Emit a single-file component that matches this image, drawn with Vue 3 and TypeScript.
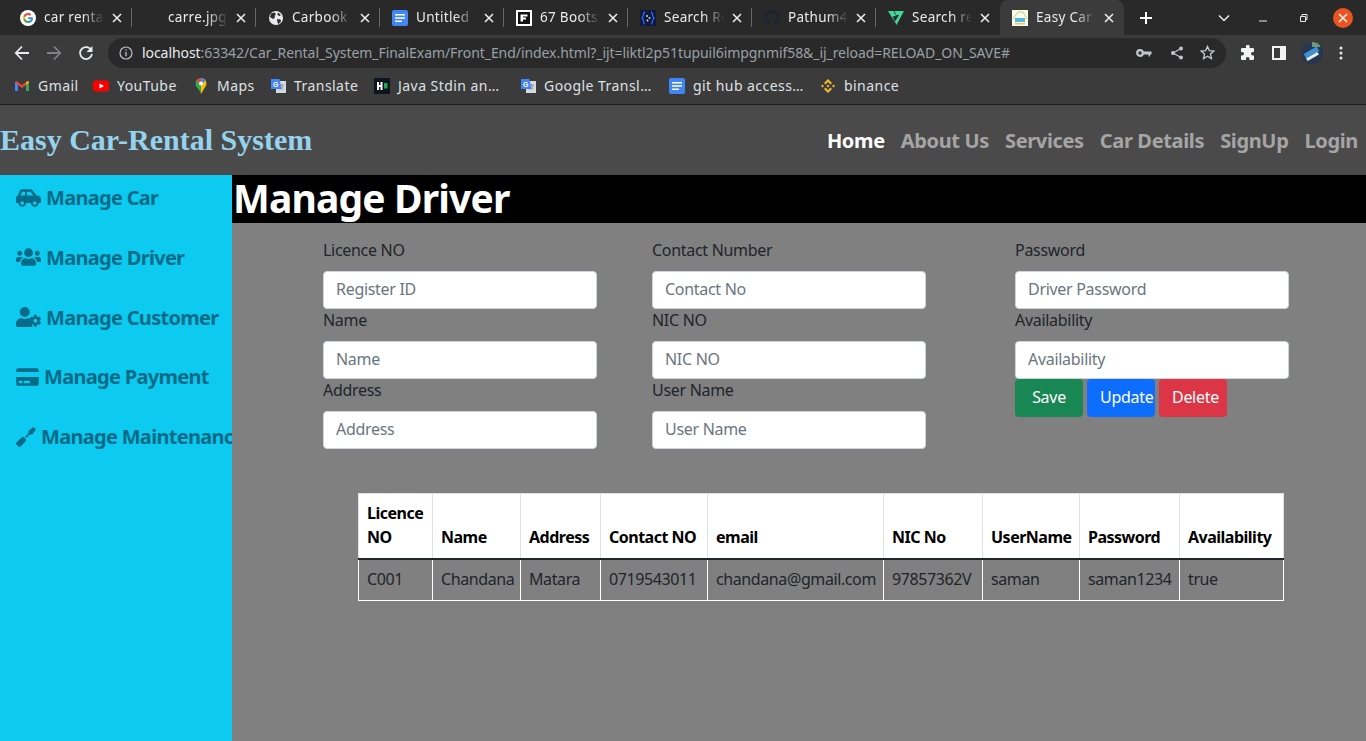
<template>
  <div class="page">
    <!-- browser chrome -->
    <div class="tabstrip">
      <div v-for="t in tabs" :key="t.title" class="tab" :class="{ active: t.active }">
        <span class="favicon">
          <svg v-if="t.icon === 'google'" viewBox="0 0 16 16" width="16" height="16">
            <circle cx="8" cy="8" r="8" fill="#fff" />
            <path d="M12.9 8.2c0-.4 0-.7-.1-1H8v1.9h2.8c-.1.7-.5 1.2-1 1.6v1.3h1.6c1-.9 1.5-2.2 1.5-3.8z" fill="#4285f4" />
            <path d="M8 13c1.4 0 2.5-.5 3.4-1.300L9.800 10.400c-.5.3-1 .5-1.800.5-1.300 0-2.500-.9-2.900-2.100H3.500v1.300C4.300 11.900 6 13 8 13z" fill="#34a853" />
            <path d="M5.100 8.800c-.2-.5-.2-1.100 0-1.600V5.900H3.500c-.7 1.300-.7 2.900 0 4.200z" fill="#fbbc05" />
            <path d="M8 5c.8 0 1.400.3 1.900.8l1.400-1.400C10.500 3.500 9.400 3 8 3 6 3 4.300 4.100 3.500 5.900l1.600 1.300C5.500 5.900 6.700 5 8 5z" fill="#ea4335" />
          </svg>
          <svg v-else-if="t.icon === 'globe'" viewBox="0 0 16 16" width="16" height="16">
            <circle cx="8" cy="8" r="7" fill="#e8eaed" />
            <path d="M3 3.500 6.500 2.500 8 4 6.500 6 7 7.500 5 9 2 7zM9 9l3.500.5.5 2-2.500 2.500-1-1.500zM10 2.500l3 2.500-1.500 1-2-1z" fill="#2b2b2b" />
          </svg>
          <svg v-else-if="t.icon === 'docs'" viewBox="0 0 16 16" width="16" height="16">
            <rect width="16" height="16" rx="2" fill="#4285f4" />
            <path d="M3 4h10v1.500H3zM3 7.200h10v1.500H3zM3 10.400h7v1.500H3z" fill="#fff" />
          </svg>
          <svg v-else-if="t.icon === 'f'" viewBox="0 0 16 16" width="16" height="16">
            <rect width="16" height="16" fill="#fff" />
            <path d="M2 2h12v12H2zM4.500 4.500v7H7V9.500h3V7.500H7v-1h4.500v-2z" fill="#111" fill-rule="evenodd" />
          </svg>
          <svg v-else-if="t.icon === 'code'" viewBox="0 0 16 16" width="16" height="16">
            <rect width="16" height="16" fill="#101a3c" />
            <path d="M5 2C3 2 4 7 2 8c2 1 1 6 3 6M11 2c2 0 1 5 3 6-2 1-1 6-3 6" fill="none" stroke="#2a6bf2" stroke-width="1.300" />
            <circle cx="7" cy="6" r="1" fill="#cfd8ea" /><circle cx="9.500" cy="8" r="1" fill="#cfd8ea" /><circle cx="7.500" cy="10.500" r="1" fill="#cfd8ea" />
          </svg>
          <svg v-else-if="t.icon === 'github'" viewBox="0 0 16 16" width="16" height="16">
            <path d="M8 0a8 8 0 0 0-2.500 15.600c.4.1.5-.2.5-.4v-1.400c-2.200.5-2.700-1-2.700-1-.4-.9-.9-1.200-.9-1.200-.7-.5.1-.5.1-.5.8.1 1.200.8 1.200.8.7 1.200 1.900.9 2.300.7.1-.5.3-.9.5-1.100-1.800-.2-3.600-.9-3.600-4 0-.9.3-1.600.8-2.100-.1-.2-.4-1 .1-2.100 0 0 .7-.2 2.200.8a7.600 7.600 0 0 1 4 0c1.500-1 2.200-.8 2.200-.8.4 1.100.2 1.900.1 2.100.5.6.8 1.300.8 2.100 0 3.100-1.900 3.700-3.700 3.900.3.3.6.8.6 1.500v2.200c0 .2.1.5.6.4A8 8 0 0 0 8 0z" fill="#1c2530" />
          </svg>
          <svg v-else-if="t.icon === 'vuetify'" viewBox="0 0 16 16" width="16" height="16">
            <path d="M0 1h5.500L8 6 4.500 6.500 8 14zM6.500 1H16L8.500 15l-1.500-3.500L11 5H8z" fill="#41d69a" />
          </svg>
          <svg v-else-if="t.icon === 'easy'" viewBox="0 0 16 16" width="16" height="16">
            <rect width="16" height="16" fill="#fbfbee" />
            <path d="M1 9 6 2h5l4 7" fill="none" stroke="#b9d36d" stroke-width="1" />
            <rect x="3" y="8" width="10" height="4" fill="#55b8e8" />
            <rect x="3" y="13" width="10" height="1.500" fill="#e9c95a" />
          </svg>
        </span>
        <span class="tab-title">{{ t.title }}</span>
        <svg class="tab-close" viewBox="0 0 10 10" width="10" height="10"><path d="M1 1l8 8M9 1l-8 8" stroke="#e8eaed" stroke-width="1.600" /></svg>
      </div>
      <svg class="newtab" viewBox="0 0 14 14" width="14" height="14"><path d="M7 1v12M1 7h12" stroke="#fff" stroke-width="2" /></svg>
      <div class="winctl">
        <svg class="chev" viewBox="0 0 12 8" width="12" height="8"><path d="M1 1.500 6 6.500l5-5" fill="none" stroke="#e8eaed" stroke-width="1.500" /></svg>
        <svg class="ctl-min" viewBox="0 0 10 10" width="10" height="10"><path d="M1 8h8" stroke="#e8eaed" stroke-width="1" /></svg>
        <svg class="ctl-max" viewBox="0 0 10 10" width="10" height="10"><path d="M2.500 3.500h5v5h-5zM4 3.500V1.500h5v5H7.500" fill="none" stroke="#e8eaed" stroke-width="1" /></svg>
        <span class="ctl-close"><svg viewBox="0 0 10 10" width="10" height="10"><path d="M1 1l8 8M9 1l-8 8" stroke="#fff" stroke-width="1.400" /></svg></span>
      </div>
    </div>

    <div class="toolbar">
      <svg class="tb-ico" viewBox="0 0 16 16" width="16" height="16"><path d="M15 8H2M8 1.500 1.800 8 8 14.500" fill="none" stroke="#e8eaed" stroke-width="1.800" /></svg>
      <svg class="tb-ico" viewBox="0 0 16 16" width="16" height="16"><path d="M1 8h13M8 1.500 14.200 8 8 14.500" fill="none" stroke="#7f8184" stroke-width="1.800" /></svg>
      <svg class="tb-ico" viewBox="0 0 16 16" width="16" height="16"><path d="M13.500 5.500A6 6 0 1 0 14 9" fill="none" stroke="#e8eaed" stroke-width="1.800" /><path d="M14.500 1v6h-6z" fill="#e8eaed" /></svg>
      <div class="omnibox">
        <svg class="info" viewBox="0 0 14 14" width="14" height="14"><circle cx="7" cy="7" r="6" fill="none" stroke="#bdc1c6" stroke-width="1.200" /><path d="M7 6v4.200M7 3.500v1.300" stroke="#bdc1c6" stroke-width="1.300" /></svg>
        <span class="url"><b>localhost</b>:63342/Car_Rental_System_FinalExam/Front_End/index.html?_ijt=liktl2p51tupuil6impgnmif58&amp;_ij_reload=RELOAD_ON_SAVE#</span>
        <svg class="omni-ico key" viewBox="0 0 16 10" width="16" height="10"><circle cx="4" cy="5" r="2.800" fill="none" stroke="#c4c7ca" stroke-width="2.200" /><path d="M7 3.500h8.500v3H14V8.500h-1.500v-2H7z" fill="#c4c7ca" /></svg>
        <svg class="omni-ico share" viewBox="0 0 14 14" width="14" height="14"><circle cx="11" cy="2.500" r="2" fill="#c4c7ca" /><circle cx="3" cy="7" r="2" fill="#c4c7ca" /><circle cx="11" cy="11.500" r="2" fill="#c4c7ca" /><path d="M11 2.500 3 7l8 4.500" fill="none" stroke="#c4c7ca" stroke-width="1.200" /></svg>
        <svg class="omni-ico" viewBox="0 0 16 16" width="15" height="15"><path d="M8 1.500 10 6l4.800.5-3.600 3.200 1 4.800L8 12l-4.200 2.500 1-4.800L1.200 6.500 6 6z" fill="none" stroke="#c4c7ca" stroke-width="1.400" /></svg>
      </div>
      <div class="tb-right">
        <svg viewBox="0 0 16 16" width="16" height="16"><path d="M6 1.500a1.800 1.800 0 0 1 3.600 0V3H13a1 1 0 0 1 1 1v3h-1.200a1.800 1.800 0 0 0 0 3.600H14V14a1 1 0 0 1-1 1H9.500v-1.200a1.800 1.800 0 0 0-3.600 0V15H2a1 1 0 0 1-1-1v-3.500h1.200a1.800 1.800 0 0 0 0-3.600H1V4a1 1 0 0 1 1-1h4z" fill="#f1f3f4" /></svg>
        <svg viewBox="0 0 14 14" width="14" height="14"><path d="M0 0h14v14H0zM2 2v10h6V2z" fill="#f1f3f4" fill-rule="evenodd" /></svg>
        <span class="avatar"><i class="av1"></i><i class="av2"></i><i class="av3"></i></span>
        <svg viewBox="0 0 4 14" width="4" height="14"><circle cx="2" cy="2" r="1.500" fill="#e8eaed" /><circle cx="2" cy="7" r="1.500" fill="#e8eaed" /><circle cx="2" cy="12" r="1.500" fill="#e8eaed" /></svg>
      </div>
    </div>

    <div class="bookmarks">
      <div v-for="b in bookmarks" :key="b.label" class="bookmark" :style="{ width: b.width + 'px' }">
        <span class="bm-ico">
          <svg v-if="b.icon === 'gmail'" viewBox="0 0 16 16" width="16" height="16">
            <path d="M1 4v9h3V7l4 3 4-3v6h3V4l-1.500-1L8 7 2.500 3z" fill="#ea4335" />
            <path d="M1 4v9h3V7z" fill="#4285f4" /><path d="M15 4v9h-3V7z" fill="#34a853" /><path d="M12 7V4.300L14 3l1 1z" fill="#fbbc05" />
          </svg>
          <svg v-else-if="b.icon === 'youtube'" viewBox="0 0 16 16" width="16" height="16">
            <rect x="0" y="2.500" width="16" height="11" rx="3" fill="#f00" /><path d="M6.500 5.500 11 8l-4.500 2.500z" fill="#fff" />
          </svg>
          <svg v-else-if="b.icon === 'maps'" viewBox="0 0 16 16" width="16" height="16">
            <path d="M8 0a5.500 5.500 0 0 0-5.500 5.500C2.500 9.500 7 11.500 8 16z" fill="#34a853" />
            <path d="M8 0a5.500 5.500 0 0 1 5.500 5.500c0 1-.4 2-1 3L8 16z" fill="#fbbc05" />
            <path d="M3.500 2.500A5.500 5.500 0 0 1 8 0v3.500A2 2 0 0 0 6 5z" fill="#ea4335" />
            <path d="M8 0a5.500 5.500 0 0 1 4.500 2.500L10 5a2 2 0 0 0-2-1.500z" fill="#4285f4" />
            <circle cx="8" cy="5.500" r="2" fill="#fff" />
          </svg>
          <svg v-else-if="b.icon === 'translate'" viewBox="0 0 16 16" width="16" height="16">
            <rect x="6" y="3" width="10" height="12" fill="#d7dadc" />
            <path d="M9 7h5M11.500 6v1.500M13 7.500c-.5 2-2 3.500-3.500 4M10 8.500c.8 1.500 2 2.500 3.500 3" fill="none" stroke="#8a8f94" stroke-width=".9" />
            <path d="M1 1h8.500l2 10H1z" fill="#4285f4" />
            <text x="3" y="8.500" font-size="7" font-weight="700" fill="#fff" font-family="Liberation Sans, sans-serif">G</text>
          </svg>
          <svg v-else-if="b.icon === 'hacker'" viewBox="0 0 16 16" width="16" height="16">
            <rect width="16" height="16" fill="#0e141e" />
            <path d="M3 4h2v3h1.500V4h2v8h-2V9H5v3H3z" fill="#fff" /><rect x="10" y="5" width="3.500" height="5.500" fill="#1ba94c" />
          </svg>
          <svg v-else-if="b.icon === 'docs'" viewBox="0 0 16 16" width="16" height="16">
            <rect width="16" height="16" rx="2" fill="#4285f4" />
            <path d="M3 4h10v1.500H3zM3 7.200h10v1.500H3zM3 10.400h7v1.500H3z" fill="#fff" />
          </svg>
          <svg v-else-if="b.icon === 'binance'" viewBox="0 0 16 16" width="16" height="16">
            <path d="M8 1 12 5l-1.500 1.500L8 4 5.500 6.500 4 5zM2.500 6.500 4 8 2.500 9.500 1 8zM13.500 6.500 15 8l-1.500 1.500L12 8zM8 6.500 9.500 8 8 9.500 6.500 8zM4 11l1.500-1.500L8 12l2.500-2.500L12 11l-4 4z" fill="#f3ba2f" />
          </svg>
        </span>
        <span class="bm-label">{{ b.label }}</span>
      </div>
    </div>

    <!-- page -->
    <nav class="navbar">
      <span class="brand">Easy Car-Rental System</span>
      <ul class="nav-links">
        <li v-for="(l, i) in navLinks" :key="l" :class="{ current: i === 0 }">{{ l }}</li>
      </ul>
    </nav>

    <div class="body-row">
      <aside class="sidebar">
        <a class="side-link">
          <svg class="si" viewBox="0 0 640 512"><path d="M544 192h-16L419.220 56.020A64.025 64.025 0 0 0 369.240 32H155.330c-26.170 0-49.700 15.930-59.420 40.230L48 194.260C20.440 201.400 0 226.210 0 256v112c0 8.840 7.160 16 16 16h48c0 53.020 42.980 96 96 96s96-42.980 96-96h128c0 53.020 42.980 96 96 96s96-42.980 96-96h48c8.840 0 16-7.160 16-16v-80c0-53.020-42.980-96-96-96zM160 432c-26.470 0-48-21.530-48-48s21.530-48 48-48 48 21.530 48 48-21.530 48-48 48zm72-240H116.930l38.400-96H232v96zm48 0V96h89.240l76.800 96H280zm200 240c-26.470 0-48-21.530-48-48s21.530-48 48-48 48 21.530 48 48-21.530 48-48 48z" /></svg>
          Manage Car
        </a>
        <a class="side-link">
          <svg class="si" viewBox="0 0 640 512"><path d="M96 224c35.300 0 64-28.700 64-64s-28.700-64-64-64-64 28.700-64 64 28.700 64 64 64zm448 0c35.300 0 64-28.700 64-64s-28.700-64-64-64-64 28.700-64 64 28.700 64 64 64zm32 32h-64c-17.600 0-33.500 7.100-45.100 18.600 40.300 22.100 68.900 62 75.100 109.400h66c17.700 0 32-14.300 32-32v-32c0-35.300-28.700-64-64-64zm-256 0c61.900 0 112-50.100 112-112S381.900 32 320 32 208 82.100 208 144s50.100 112 112 112zm76.800 32h-8.300c-20.800 10-43.900 16-68.500 16s-47.600-6-68.500-16h-8.300C179.600 288 128 339.600 128 403.200V432c0 26.500 21.500 48 48 48h288c26.500 0 48-21.500 48-48v-28.800c0-63.600-51.600-115.200-115.200-115.200zm-223.700-13.400C161.500 263.100 145.600 256 128 256H64c-35.300 0-64 28.700-64 64v32c0 17.700 14.300 32 32 32h65.900c6.300-47.400 34.900-87.300 75.200-109.400z" /></svg>
          Manage Driver
        </a>
        <a class="side-link">
          <svg class="si" viewBox="0 0 640 512"><path d="M224 256a128 128 0 1 0 0-256 128 128 0 0 0 0 256zM313 288h-16c-22 10-47 16-73 16s-51-6-73-16h-16C60 288 0 348 0 422v42c0 26 22 48 48 48h352c12 0 23-4 32-12-30-30-52-70-52-148 0-20 4-40 10-56-22-5-50-8-77-8zM610.500 373.300c2.600-14.100 2.600-28.500 0-42.600l25.800-14.900c3-1.700 4.300-5.200 3.300-8.500-6.700-21.600-18.200-41.200-33.200-57.400-2.300-2.500-6-3.100-9-1.400l-25.800 14.900c-10.900-9.300-23.400-16.500-36.900-21.300v-29.800c0-3.400-2.400-6.400-5.700-7.100-22.300-5-45-4.800-66.200 0-3.300.7-5.700 3.700-5.700 7.100v29.800c-13.500 4.800-26 12-36.900 21.300l-25.800-14.900c-2.900-1.700-6.700-1.100-9 1.400-15 16.200-26.500 35.800-33.200 57.400-1 3.300.4 6.800 3.300 8.500l25.800 14.900c-2.600 14.100-2.600 28.500 0 42.600l-25.800 14.900c-3 1.700-4.300 5.200-3.300 8.500 6.700 21.600 18.200 41.100 33.200 57.400 2.300 2.500 6 3.100 9 1.400l25.800-14.900c10.900 9.300 23.400 16.500 36.900 21.300v29.800c0 3.400 2.400 6.400 5.700 7.100 22.300 5 45 4.800 66.200 0 3.300-.7 5.700-3.700 5.700-7.100v-29.800c13.500-4.800 26-12 36.900-21.300l25.800 14.900c2.900 1.700 6.700 1.100 9-1.400 15-16.200 26.500-35.800 33.200-57.400 1-3.300-.4-6.800-3.300-8.500l-25.800-14.900zM496 400.500c-26.800 0-48.500-21.800-48.500-48.500s21.800-48.500 48.500-48.500 48.500 21.800 48.500 48.500-21.700 48.500-48.500 48.500z" /></svg>
          Manage Customer
        </a>
        <a class="side-link">
          <svg class="si card" viewBox="0 0 576 512"><path d="M0 432c0 26.500 21.500 48 48 48h480c26.500 0 48-21.500 48-48V256H0v176zm192-68c0-6.600 5.400-12 12-12h136c6.600 0 12 5.400 12 12v40c0 6.600-5.400 12-12 12H204c-6.600 0-12-5.400-12-12v-40zm-128 0c0-6.600 5.400-12 12-12h72c6.600 0 12 5.400 12 12v40c0 6.600-5.400 12-12 12H76c-6.600 0-12-5.400-12-12v-40zM576 80v48H0V80c0-26.500 21.500-48 48-48h480c26.500 0 48 21.500 48 48z" /></svg>
          Manage Payment
        </a>
        <a class="side-link">
          <svg class="si tool" viewBox="0 0 512 512"><path d="M448 0L320 96v62.060l-83.030 83.030c6.790 4.250 13.270 9.060 19.070 14.870 5.800 5.800 10.620 12.280 14.870 19.070L353.940 192H416l96-128-64-64zM128 278.590L10.920 395.670c-14.550 14.550-14.550 38.150 0 52.710l52.700 52.700c14.560 14.560 38.150 14.560 52.710 0L233.410 384c29.110-29.110 29.110-76.300 0-105.410s-76.300-29.110-105.410 0z" /></svg>
          Manage Maintenance
        </a>
      </aside>

      <main class="content">
        <h1 class="page-title">Manage Driver</h1>
        <form class="driver-form" @submit.prevent>
          <div v-for="(col, ci) in formCols" :key="ci" class="form-col" :class="'col-' + ci">
            <div v-for="f in col" :key="f.label" class="field">
              <label>{{ f.label }}</label>
              <input type="text" :placeholder="f.placeholder" />
            </div>
            <div v-if="ci === 2" class="btns">
              <button class="btn save">Save</button>
              <button class="btn update">Update</button>
              <button class="btn del">Delete</button>
            </div>
          </div>
        </form>

        <div class="table-wrap">
          <table class="driver-table">
            <colgroup>
              <col v-for="c in columns" :key="c.title" :style="{ width: c.width + 'px' }" />
            </colgroup>
            <thead>
              <tr>
                <th v-for="c in columns" :key="c.title">{{ c.title }}</th>
              </tr>
            </thead>
            <tbody>
              <tr v-for="row in drivers" :key="row[0]">
                <td v-for="(v, i) in row" :key="i">{{ v }}</td>
              </tr>
            </tbody>
          </table>
        </div>
      </main>
    </div>
  </div>
</template>

<script setup lang="ts">
const tabs = [
  { title: 'car rental', icon: 'google' },
  { title: 'carre.jpg', icon: 'none' },
  { title: 'Carbook', icon: 'globe' },
  { title: 'Untitled', icon: 'docs' },
  { title: '67 Boots', icon: 'f' },
  { title: 'Search Re', icon: 'code' },
  { title: 'Pathum4', icon: 'github' },
  { title: 'Search re', icon: 'vuetify' },
  { title: 'Easy Car', icon: 'easy', active: true },
]

const bookmarks = [
  { label: 'Gmail', icon: 'gmail', width: 79 },
  { label: 'YouTube', icon: 'youtube', width: 100 },
  { label: 'Maps', icon: 'maps', width: 77 },
  { label: 'Translate', icon: 'translate', width: 104 },
  { label: 'Java Stdin an…', icon: 'hacker', width: 146 },
  { label: 'Google Transl…', icon: 'translate', width: 149 },
  { label: 'git hub access…', icon: 'docs', width: 151 },
  { label: 'binance', icon: 'binance', width: 90 },
]

const navLinks = ['Home', 'About Us', 'Services', 'Car Details', 'SignUp', 'Login']

const formCols = [
  [
    { label: 'Licence NO', placeholder: 'Register ID' },
    { label: 'Name', placeholder: 'Name' },
    { label: 'Address', placeholder: 'Address' },
  ],
  [
    { label: 'Contact Number', placeholder: 'Contact No' },
    { label: 'NIC NO', placeholder: 'NIC NO' },
    { label: 'User Name', placeholder: 'User Name' },
  ],
  [
    { label: 'Password', placeholder: 'Driver Password' },
    { label: 'Availability', placeholder: 'Availability' },
  ],
]

const columns = [
  { title: 'Licence NO', width: 74 },
  { title: 'Name', width: 88 },
  { title: 'Address', width: 80 },
  { title: 'Contact NO', width: 107 },
  { title: 'email', width: 176 },
  { title: 'NIC No', width: 99 },
  { title: 'UserName', width: 97 },
  { title: 'Password', width: 100 },
  { title: 'Availability', width: 104 },
]

const drivers = [
  ['C001', 'Chandana', 'Matara', '0719543011', 'chandana@gmail.com', '97857362V', 'saman', 'saman1234', 'true'],
]
</script>

<style scoped>
.page {
  width: 1366px;
  height: 741px;
  overflow: hidden;
  display: flex;
  flex-direction: column;
  font-family: "Noto Sans", "DejaVu Sans", sans-serif;
  background: #808080;
}

/* chrome */
.tabstrip {
  height: 35px;
  flex: none;
  background: #292929;
  display: flex;
  align-items: center;
  padding-left: 8px;
  color: #e8eaed;
  font-size: 13.5px;
  letter-spacing: 0.3px;
}
.tab {
  width: 124px;
  height: 35px;
  padding: 0 12px;
  box-sizing: border-box;
  display: flex;
  align-items: center;
  position: relative;
}
.tab::after {
  content: "";
  position: absolute;
  right: 0;
  top: 8px;
  height: 19px;
  width: 1px;
  background: #666;
}
.tab.active::after,
.tab:nth-child(8)::after {
  display: none;
}
.tab.active {
  background: #3b3b3b;
  border-radius: 8px 8px 0 0;
}
.favicon {
  width: 16px;
  height: 16px;
  margin-right: 8px;
  flex: none;
  display: flex;
}
.tab-title {
  width: 60px;
  overflow: hidden;
  white-space: nowrap;
  line-height: 18px;
  margin-top: -2px;
  -webkit-mask-image: linear-gradient(90deg, #000 65%, transparent 100%);
  mask-image: linear-gradient(90deg, #000 65%, transparent 100%);
  flex: none;
}
.tab-close {
  margin-left: 8px;
  flex: none;
}
.newtab {
  margin-left: 15px;
}
.winctl {
  margin-left: auto;
  display: flex;
  align-items: center;
  padding-right: 13px;
}
.chev { margin-right: 28px; }
.ctl-min { margin-right: 30px; }
.ctl-max { margin-right: 25px; }
.ctl-close {
  width: 20px;
  height: 20px;
  border-radius: 50%;
  background: #e95420;
  display: flex;
  align-items: center;
  justify-content: center;
}

.toolbar {
  height: 35px;
  flex: none;
  background: #3b3b3b;
  display: flex;
  align-items: center;
  padding-left: 14px;
}
.tb-ico {
  margin-right: 16px;
  flex: none;
}
.omnibox {
  width: 1118px;
  height: 30px;
  margin-left: -2px;
  border-radius: 15px;
  background: #292929;
  flex: none;
  display: flex;
  align-items: center;
  padding-left: 11px;
  box-sizing: border-box;
}
.info {
  margin-right: 9px;
  flex: none;
}
.url {
  width: 980px;
  flex: none;
  white-space: nowrap;
  overflow: hidden;
  font-size: 14px;
  letter-spacing: -0.065px;
  color: #9aa0a6;
}
.url b {
  font-weight: 400;
  color: #e8eaed;
}
.omni-ico {
  flex: none;
  margin-left: 16px;
}
.omni-ico.key { margin-left: 14px; }
.omni-ico.share { margin-left: 18px; }
.tb-right {
  display: flex;
  align-items: center;
  margin-left: 14px;
  gap: 16px;
}
.avatar {
  width: 22px;
  height: 22px;
  border-radius: 50%;
  overflow: hidden;
  position: relative;
  background: #26384f;
  display: block;
  margin: 0 0 0 -1px;
}
.avatar i {
  position: absolute;
  display: block;
}
.av1 { left: 3px; top: 8px; width: 15px; height: 5px; background: #3d8fd6; transform: rotate(-30deg); }
.av2 { left: 5px; top: 13px; width: 13px; height: 3px; background: #e9eef2; transform: rotate(-30deg); }
.av3 { left: 11px; top: 0; width: 8px; height: 5px; background: #6f9b73; }

.bookmarks {
  height: 35px;
  flex: none;
  box-sizing: border-box;
  background: #3b3b3b;
  border-bottom: 1px solid #1f1f1f;
  display: flex;
  align-items: center;
  padding: 0 0 3px 14px;
  font-size: 14px;
  letter-spacing: 0.45px;
  color: #dfe1e5;
}
.bookmark {
  display: flex;
  align-items: center;
  flex: none;
}
.bm-ico {
  width: 16px;
  height: 16px;
  display: flex;
  margin-right: 8px;
  flex: none;
}
.bm-label { white-space: nowrap; }

/* navbar */
.navbar {
  height: 70px;
  flex: none;
  box-sizing: border-box;
  background: #4a4a4a;
  display: flex;
  align-items: center;
  justify-content: space-between;
  padding-right: 8px;
}
.brand {
  font-family: "Liberation Serif", serif;
  font-weight: 700;
  font-size: 30px;
  color: #95d2ee;
}
.nav-links {
  display: flex;
  gap: 16px;
  list-style: none;
  margin: 0;
  padding: 0;
  font-size: 20px;
  font-weight: 700;
  letter-spacing: -0.35px;
  color: #a5a5a5;
}
.nav-links .current { color: #fff; }

/* body */
.body-row {
  flex: 1;
  display: flex;
  min-height: 0;
}
.sidebar {
  width: 232px;
  flex: none;
  background: #0dcaf0;
  overflow: hidden;
  padding: 7.6px 0 0 16px;
  box-sizing: border-box;
}
.side-link {
  display: flex;
  align-items: center;
  gap: 5px;
  height: 30px;
  margin-bottom: 29.75px;
  font-size: 20px;
  font-weight: 700;
  letter-spacing: -0.7px;
  color: #056b87;
  white-space: nowrap;
}
.si {
  height: 20px;
  width: 25px;
  fill: #056b87;
  flex: none;
}
.si.card { width: 23px; }
.si.tool { width: 20px; }

.content {
  flex: 1;
  min-width: 0;
  background: #808080;
}
.page-title {
  margin: 0;
  height: 48px;
  line-height: 46px;
  background: #000;
  color: #fff;
  font-size: 39px;
  font-weight: 700;
  letter-spacing: -0.85px;
  padding-left: 1px;
}
.driver-form {
  display: flex;
  padding: 15px 0 0 91px;
  letter-spacing: -0.3px;
}
.form-col {
  width: 274px;
  flex: none;
}
.col-0 { margin-right: 55px; }
.col-1 { margin-right: 89px; }
.field {
  height: 70px;
}
.field label {
  display: block;
  font-size: 16px;
  line-height: 24px;
  margin-bottom: 9px;
  color: #212529;
}
.field input {
  display: block;
  width: 100%;
  height: 38px;
  box-sizing: border-box;
  border: 1px solid #ced4da;
  border-radius: 4px;
  padding: 4px 12px 6px;
  font: inherit;
  font-size: 16px;
  letter-spacing: inherit;
  color: #212529;
  background: #fff;
}
.field input::placeholder {
  color: #6c757d;
}
.btns {
  display: flex;
  gap: 4px;
  margin-top: 1px;
}
.btn {
  width: 68px;
  height: 38px;
  padding: 0 0 2px 13px;
  border: 0;
  border-radius: 4px;
  color: #fff;
  font: inherit;
  font-size: 16px;
  letter-spacing: inherit;
  text-align: left;
  white-space: nowrap;
  overflow: hidden;
}
.save { background: #198754; text-align: center; padding: 0 0 2px; }
.update { background: #0d6efd; }
.del { background: #dc3545; }

.table-wrap {
  padding: 45px 0 0 126px;
}
.driver-table {
  width: 925px;
  table-layout: fixed;
  border-collapse: collapse;
  font-size: 16px;
  letter-spacing: -0.4px;
  color: #212529;
}
.driver-table th,
.driver-table td {
  padding: 7px 8px 9px;
  line-height: 24px;
  text-align: left;
  vertical-align: bottom;
  white-space: normal;
}
.driver-table th {
  background: #fff;
  color: #000;
  font-weight: 700;
  letter-spacing: -0.5px;
  border: 1px solid #dee2e6;
  border-bottom: 2px solid #212529;
}
.driver-table td {
  border: 1px solid #fff;
  border-top: 0;
  white-space: nowrap;
}
</style>

<style>
html, body { margin: 0; overflow: hidden; }
</style>
